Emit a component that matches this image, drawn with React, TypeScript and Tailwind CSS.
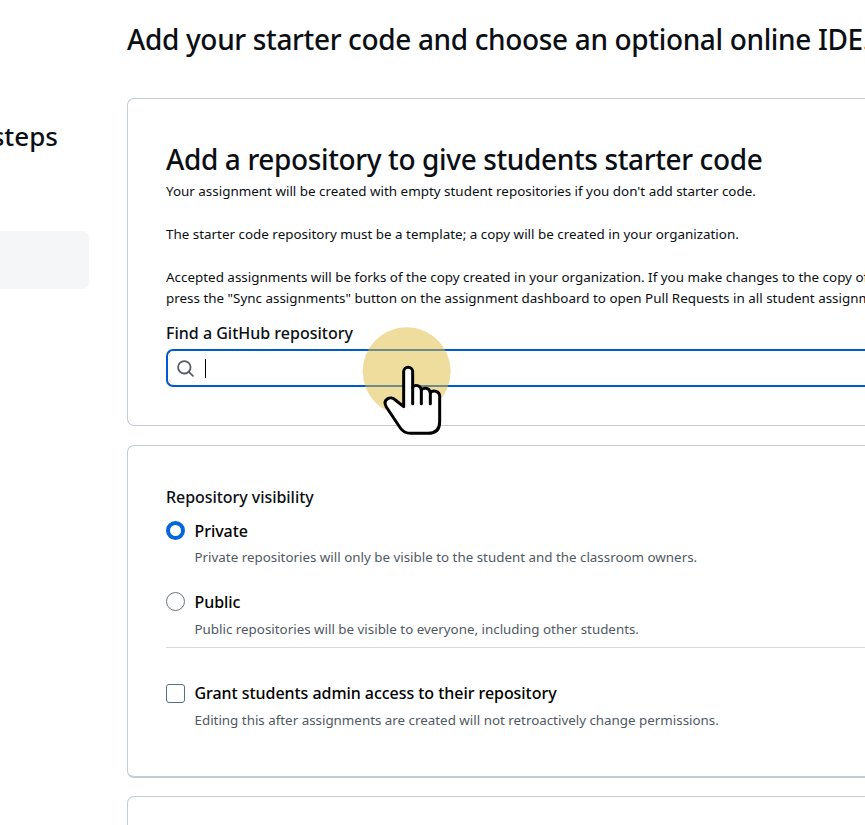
import React from 'react'

type optionProps = {
  type: 'radio' | 'checkbox',
  label: string,
  description: string,
  checked?: boolean,
  className?: string,
  textClass?: string
}

const Option = ({type,label,description,checked,className = '',textClass = ''}:optionProps) => {
  return (
    <div className={`flex gap-[9.500px] ${className}`}>
      {type==='radio'&&checked&&<div className="size-[19px] shrink-0 rounded-full border-4 border-[#0366db] bg-white mt-[3px]" />}
      {type==='radio'&&!checked&&<div className="size-[19px] shrink-0 rounded-full border border-[#6e7781] bg-white mt-[3px]" />}
      {type==='checkbox'&&<div className="size-[19px] shrink-0 rounded-[3px] border border-[#57707f] bg-white mt-[4px]" />}
      <div className="whitespace-nowrap">
        <div className="text-[16px] leading-[26px] font-medium tracking-[-0.05px] text-black">{label}</div>
        <div className={`text-[13.370px] leading-[21px] text-[#505963] ${textClass}`}>{description}</div>
      </div>
    </div>
  )
}

const SearchIcon = () => {
  return (
    <svg className="size-[19px] text-[#57606a]" viewBox="0 0 16 16" fill="currentColor">
      <path d="M10.68 11.74a6 6 0 0 1-7.922-8.982 6 6 0 0 1 8.982 7.922l3.04 3.04a.749.749 0 0 1-.326 1.275.749.749 0 0 1-.734-.215ZM11.5 7a4.499 4.499 0 1 0-8.997 0A4.499 4.499 0 0 0 11.5 7Z" />
    </svg>
  )
}

const HandPointer = () => {
  return (
    <svg className="absolute left-[350px] top-[310px] w-[120px] h-[140px]" viewBox="0 0 360 420">
      <circle cx="170" cy="184" r="132" fill="#dfbb3e" fillOpacity="0.5" />
      <g fill="#fff" stroke="#000" strokeWidth="9" strokeLinecap="round" strokeLinejoin="round">
        <path d="M161 290V185a13.500 13.500 0 0 1 27 0V232C194 222 212 226 214 240C220 231 238 233 241 248C248 240 269 242 269 258V335Q269 370 234 370H182Q162 370 151 354L109 291C96 268 122 256 136 270Z" />
        <path d="M188 232V281M214 240V281M241 248V281" fill="none" />
      </g>
    </svg>
  )
}

const App = () => {
  return (
    <div className="relative flex w-[865px] h-[825px] overflow-hidden bg-white font-['Noto_Sans','Open_Sans',sans-serif] text-[#0b0f14]">
      <aside className="w-[89px] shrink-0 pt-[116px]">
        <div className="flex justify-end pr-[31px] text-[26px] leading-[40px] font-medium">steps</div>
        <div className="mt-[75px] h-[58px] rounded-r-[7px] bg-[#f5f6f8]" />
      </aside>
      <main className="ml-[38px] w-[738px] shrink-0 whitespace-nowrap">
        <h1 className="pt-[19px] text-[28px] leading-[40px] font-medium tracking-[-0.35px]">Add your starter code and choose an optional online IDE.</h1>

        <section className="mt-[39px] h-[328px] rounded-l-[7px] border border-r-0 border-[#c5ccd4] pl-[38px] pt-[40px]">
          <h2 className="text-[28px] leading-[40px] font-medium tracking-[-0.37px]">Add a repository to give students starter code</h2>
          <div className="text-[13.420px] leading-[21.400px]">
            <p className="mt-[2px]">Your assignment will be created with empty student repositories if you don't add starter code.</p>
            <p className="mt-[21.400px]">The starter code repository must be a template; a copy will be created in your organization.</p>
            <p className="mt-[21.400px]">Accepted assignments will be forks of the copy created in your organization. If you make changes to the copy of</p>
            <p>press the "Sync assignments" button on the assignment dashboard to open Pull Requests in all student assignment</p>
          </div>
          <div className="mt-[11.600px] text-[16px] leading-[24px] font-medium">Find a GitHub repository</div>
          <div className="mt-[4px] flex h-[38px] items-center rounded-l-[7px] border-2 border-r-0 border-[#0059d1] pl-[8px]">
            <SearchIcon />
            <div className="ml-[10px] h-[19px] w-px bg-black" />
          </div>
        </section>

        <section className="mt-[19px] h-[333px] rounded-l-[7px] border border-r-0 border-b-2 border-[#c5ccd4] pl-[38px] pt-[38px]">
          <div className="text-[16px] leading-[26px] font-medium tracking-[-0.05px]">Repository visibility</div>
          <Option type="radio" label="Private" description="Private repositories will only be visible to the student and the classroom owners." checked className="mt-[8px]" textClass="mt-[3px]" />
          <Option type="radio" label="Public" description="Public repositories will be visible to everyone, including other students." className="mt-[21px]" textClass="mt-[4px]" />
          <div className="mt-[7px] border-t border-[#d5dae0]" />
          <Option type="checkbox" label="Grant students admin access to their repository" description="Editing this after assignments are created will not retroactively change permissions." className="mt-[32px]" textClass="mt-[4px]" />
        </section>

        <section className="mt-[18px] h-[60px] rounded-l-[7px] border border-r-0 border-[#c5ccd4]" />
      </main>
      <HandPointer />
    </div>
  )
}

export default App
